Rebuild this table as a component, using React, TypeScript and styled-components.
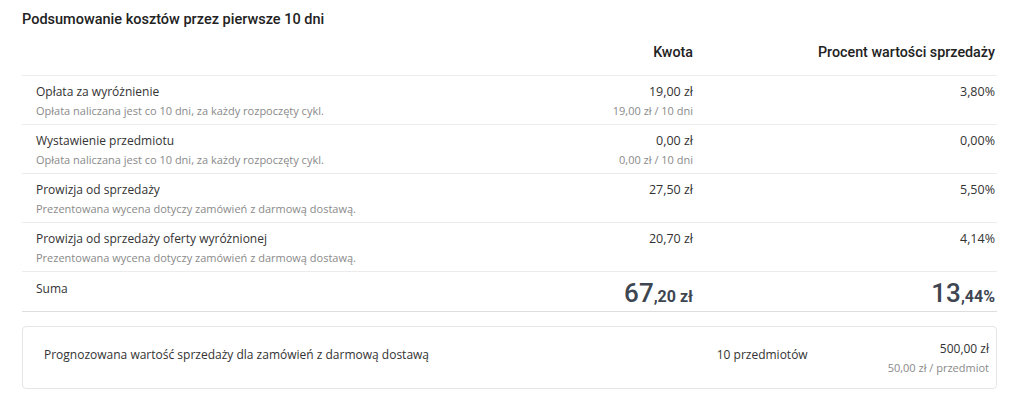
import React from 'react';
import styled, { createGlobalStyle } from 'styled-components';

const GlobalStyle = createGlobalStyle`
  html, body {
    margin: 0;
    padding: 0;
    background: #ffffff;
  }

  body {
    font-family: "Open Sans", "Liberation Sans", sans-serif;
    color: #333333;
  }
`;

const Page = styled.div`
  padding: 10px 27px 0 22px;
  width: 975px;
`;

const Title = styled.h2`
  margin: 0;
  font-family: Roboto, "Liberation Sans", sans-serif;
  font-weight: 500;
  font-size: 14.5px;
  line-height: 20px;
  color: #222222;
`;

const Grid = styled.div`
  display: grid;
  grid-template-columns: 1fr 200px 302px;
  padding: 0 2px 0 14px;
`;

const HeaderRow = styled(Grid)`
  height: 46px;
  padding-top: 13px;
  box-sizing: border-box;
  border-bottom: 1px solid #ececec;
`;

const HeaderCell = styled.div<{ $col: number }>`
  grid-column: ${p => p.$col};
  text-align: right;
  font-family: Roboto, "Liberation Sans", sans-serif;
  font-weight: 500;
  font-size: 14.3px;
  line-height: 18px;
  color: #222222;
`;

const Row = styled(Grid)`
  padding-top: 7px;
  padding-bottom: 5px;
  border-bottom: 1px solid #ececec;
`;

const Cell = styled.div<{ $right?: boolean }>`
  display: flex;
  flex-direction: column;
  align-items: ${p => (p.$right ? 'flex-end' : 'flex-start')};
`;

const Main = styled.span<{ $small?: boolean }>`
  font-size: ${p => (p.$small ? '12px' : '12.5px')};
  line-height: 18px;
  color: #333333;
  white-space: nowrap;
`;

const Sub = styled.span`
  margin-top: 2px;
  font-size: 11px;
  line-height: 16px;
  color: #8a8a8a;
  white-space: nowrap;
`;

const TotalRow = styled(Grid)`
  padding-top: 6px;
  padding-bottom: 3px;
  border-bottom: 1px solid #dedede;
`;

const TotalLabel = styled(Main)`
  margin-top: 2px;
`;

const Big = styled.span`
  display: block;
  height: 30px;
  font-family: Roboto, "Liberation Sans", sans-serif;
  font-weight: 500;
  font-size: 26px;
  line-height: 30px;
  color: #3d4651;
`;

const BigTail = styled.span`
  font-size: 16px;
  line-height: 1;
  font-weight: 700;
`;

const Card = styled.div`
  margin-top: 14px;
  height: 63px;
  box-sizing: border-box;
  border: 1px solid #e6e6e6;
  border-radius: 4px;
  padding: 0 7px 0 21px;
  display: grid;
  grid-template-columns: 1fr auto auto;
  column-gap: 80px;
  align-items: center;
`;

const CardText = styled.span<{ $raised?: boolean }>`
  font-size: 12px;
  line-height: 18px;
  color: #333333;
  margin-top: ${p => (p.$raised ? '-6px' : '0')};
`;

type Fee = {
  label: string;
  note: string;
  amount: string;
  period?: string;
  percent: string;
};

const fees: Fee[] = [
  {
    label: 'Opłata za wyróżnienie',
    note: 'Opłata naliczana jest co 10 dni, za każdy rozpoczęty cykl.',
    amount: '19,00 zł',
    period: '19,00 zł / 10 dni',
    percent: '3,80%',
  },
  {
    label: 'Wystawienie przedmiotu',
    note: 'Opłata naliczana jest co 10 dni, za każdy rozpoczęty cykl.',
    amount: '0,00 zł',
    period: '0,00 zł / 10 dni',
    percent: '0,00%',
  },
  {
    label: 'Prowizja od sprzedaży',
    note: 'Prezentowana wycena dotyczy zamówień z darmową dostawą.',
    amount: '27,50 zł',
    percent: '5,50%',
  },
  {
    label: 'Prowizja od sprzedaży oferty wyróżnionej',
    note: 'Prezentowana wycena dotyczy zamówień z darmową dostawą.',
    amount: '20,70 zł',
    percent: '4,14%',
  },
];

const App = () => {
  return (
    <Page>
      <GlobalStyle />

      <Title>Podsumowanie kosztów przez pierwsze 10 dni</Title>

      <HeaderRow>
        <HeaderCell $col={2}>Kwota</HeaderCell>
        <HeaderCell $col={3}>Procent wartości sprzedaży</HeaderCell>
      </HeaderRow>

      {fees.map((fee, index) => (
        <Row key={index}>
          <Cell>
            <Main $small>{fee.label}</Main>
            <Sub>{fee.note}</Sub>
          </Cell>
          <Cell $right>
            <Main>{fee.amount}</Main>
            {fee.period && <Sub>{fee.period}</Sub>}
          </Cell>
          <Cell $right>
            <Main>{fee.percent}</Main>
          </Cell>
        </Row>
      ))}

      <TotalRow>
        <Cell>
          <TotalLabel $small>Suma</TotalLabel>
        </Cell>
        <Cell $right>
          <Big>67<BigTail>,20 zł</BigTail></Big>
        </Cell>
        <Cell $right>
          <Big>13<BigTail>,44%</BigTail></Big>
        </Cell>
      </TotalRow>

      <Card>
        <CardText $raised>Prognozowana wartość sprzedaży dla zamówień z darmową dostawą</CardText>
        <CardText $raised>10 przedmiotów</CardText>
        <Cell $right>
          <CardText>500,00 zł</CardText>
          <Sub>50,00 zł / przedmiot</Sub>
        </Cell>
      </Card>
    </Page>
  );
};

export default App;
